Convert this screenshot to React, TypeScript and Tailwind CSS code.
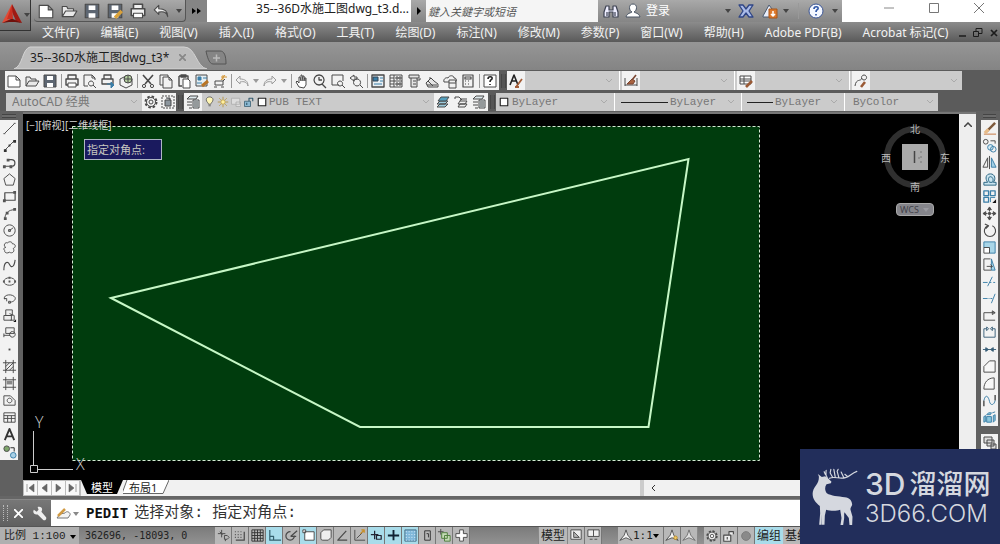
import type { ReactNode } from "react";

const K = "#4a4a4a";
const B = "#3b7fa8";

const icons: Record<string, ReactNode> = {
  new: <path d="M2 3h8l4 4v7H2zM10 3v4h4" fill="#fff" />,
  open: <path d="M2 13V4h4l1 2h5v2M2 13l3-5h10l-3 5z" fill="#e8e8e8" />,
  save: (
    <>
      <path d="M2 2h12v12H2z" fill="#5d6672" />
      <path d="M5 3h6v4H5zM5 10h6v4H5z" fill="#fff" stroke="none" />
    </>
  ),
  saveas: (
    <>
      <path d="M2 2h12v12H2z" fill="#5d6672" />
      <path d="M5 3h6v4H5zM5 10h6v4H5z" fill="#fff" stroke="none" />
      <path d="M8 14l6-6" stroke="#d9a13a" strokeWidth="3" />
    </>
  ),
  print: (
    <>
      <path d="M4 6V2h8v4M2 6h12v6H2z" fill="#f2f2f2" strokeWidth="1.4" />
      <path d="M4 10h8v4H4z" fill="#fff" />
    </>
  ),
  preview: <path d="M6 13H2V2h8l3 3v2M10 2v3h3M9 8a2.500 2.500 0 1 0 .1 0zM11 12l3 3" />,
  publish: (
    <>
      <path d="M4 6V2h7v4M2 6h11v5H2z" strokeWidth="1.3" />
      <path d="M7 11h6M11 9l3 3-3 3z" stroke={B} fill={B} />
    </>
  ),
  dwf: (
    <>
      <path d="M2 6l6-3 6 3v6l-6 3-6-3z" />
      <circle cx="10" cy="6" r="4" fill="#b4cfa0" />
      <path d="M10 2v8M6 6h8" />
    </>
  ),
  scissors: (
    <>
      <path d="M3 2l8 9M13 2L5 11" strokeWidth="1.6" />
      <circle cx="4" cy="13" r="1.600" />
      <circle cx="12" cy="13" r="1.600" />
    </>
  ),
  copydoc: <path d="M10 4V2H2v10h3M5 4h6l3 3v8H5zM11 4v3h3" />,
  paste: (
    <>
      <path d="M3 3h9v3M3 3v10h3M5 2h5v2H5z" strokeWidth="1.4" />
      <path d="M7 6h5l2 2v7H7z" fill="#fff" />
    </>
  ),
  match: (
    <>
      <path d="M2 2h11v11H2z" fill="#e5eef2" />
      <path d="M4 4h3v3H4zM9 5h4M3 10h5" stroke={B} fill={B} />
      <path d="M8 13l6-5" stroke="#b87525" strokeWidth="3" />
    </>
  ),
  block: (
    <>
      <path d="M3 8h8v4H3zM2 14h3M9 14h3M11 8l2-2" />
      <path d="M11 2v5M9 4h6M13 2l-4 5" stroke="#d29432" />
    </>
  ),
  undo: <path d="M6 3L2 7l4 4V9c4-1 7 0 8 4 0-5-3-7-8-7z" fill="#eee" />,
  redo: <path d="M10 3l4 4-4 4V9c-4-1-7 0-8 4 0-5 3-7 8-7z" fill="#eee" />,
  pan: <path d="M5 14L2 9l1-1 2 2V4h1l1 4V2h1l1 6V3h1l1 5V5h1v7l-2 3z" fill="#fff" />,
  zoom: <path d="M7 2a5 5 0 1 0 .1 0zM7 4v3h3M10 11l4 4" strokeWidth="1.300" />,
  zoomwin: <path d="M9 12H2V2h11v6M10 8a2.500 2.500 0 1 0 .1 0zM12 12l3 3" />,
  zoomprev: <path d="M6 2L2 5l4 3V6h3V4H6zM9 6a3.500 3.500 0 1 0 .1 0zM12 12l3 3" />,
  props: (
    <>
      <path d="M2 2h12v12H2z" fill="#e9eff3" strokeWidth="1.400" />
      <path d="M3 4h5v4H3z" fill={B} stroke="#345" />
      <path d="M10 5h3M10 8h3M4 11h8" stroke={B} />
    </>
  ),
  dc: <path d="M2 2h12v12H2zM6 2v12M2 5h4M2 8h12M2 11h4M8 4h2v2H8zM11 4h2v2h-2zM8 10h2v2H8zM11 10h2v2h-2z" />,
  palette: <path d="M3 2h10v3H3zM5 5v9h6V5M7 8h3M7 11h3M11 7h3v-2" fill="#e3e3e3" />,
  sheets: <path d="M2 10l5-5 3 3 4 3v3H4zM4 8l5 5M7 5l-2 0M3 12h10" fill="#e3e3e3" />,
  markup: <path d="M2 9c-1-3 2-5 4-4 1-3 6-3 6 0 3 0 3 3 1 4M7 7h7v8H7zM7 10h7M2 9h5" />,
  calc: <path d="M3 2h10v12H3zM5 4h6v2H5zM5 8h1M8 8h1M11 8h0M5 11h1M8 11h1" strokeWidth="1.200" />,
  help: (
    <>
      <path d="M2 2h12v12H2z" fill="#fff" />
      <path d="M6 6c0-3 5-3 4 0-1 1-2 1-2 3M8 11v1" strokeWidth="1.600" stroke="#222" />
    </>
  ),
  tstyle: (
    <>
      <path d="M2 12L6 2l4 10M4 8h5" stroke="#222" strokeWidth="1.600" />
      <path d="M8 14l6-8M7 14h4" stroke="#a45e39" strokeWidth="1.800" />
    </>
  ),
  dstyle: (
    <>
      <path d="M2 5v8M2 12h12M14 5v8" />
      <path d="M13 2l-4 5" stroke="#7a4530" strokeWidth="1.600" />
      <path d="M4 11l5-5 3 2-2 3z" stroke="#7a4530" fill="#a9623f" />
    </>
  ),
  table: <path d="M2 3h12v10H2zM2 6h12M2 9h12M6 6v7M10 6v7" />,
  tabstyle: (
    <>
      <path d="M2 3h11v8H2zM2 6h11M2 8h11M6 3v8" fill="#fff" />
      <path d="M8 14l6-6" stroke="#9b5a35" strokeWidth="2.600" />
    </>
  ),
  mleader: (
    <>
      <path d="M2 13C3 5 8 9 9 5M11 2a2.500 2.500 0 1 0 .1 0z" />
      <path d="M8 14l4-5" stroke="#9b5a35" strokeWidth="2.600" />
    </>
  ),
  gear: (
    <>
      <circle cx="8" cy="8" r="5.500" strokeDasharray="2.500 1.800" strokeWidth="2" />
      <circle cx="8" cy="8" r="4.500" fill="#f2f2f2" />
      <circle cx="8" cy="8" r="2" />
    </>
  ),
  wspace: (
    <>
      <path d="M2 2h12v12H2z" strokeDasharray="2 1" />
      <path d="M5 6h6v6H5zM6 4h4v2" fill="#8b959d" />
    </>
  ),
  layers: <path d="M2 5l3-3h8l-2 3zM2 8h5M2 11h5M4 14h3M8 6h6v8H8zM9 8h4M9 10h4M9 12h4" fill="#dfe9ec" />,
  layblue: (
    <>
      <path d="M2 13l3-3h8l-3 3zM2 10l3-3h8l-3 3z" fill="#9ecbdc" />
      <path d="M3 7l3-4h8l-3 4z" fill="#55a0be" />
    </>
  ),
  layprev: <path d="M2 3h4l3 3M2 3v2M5 13l2-3h7l-2 3zM5 10l2-3h7l-2 3zM7 7l1-2h6" />,
  bulb: <path d="M6 11c0-2-3-3-3-6 0-5 9-5 9 0 0 3-3 4-3 6zM6 13h3" fill="#fff6b5" />,
  sun: (
    <>
      <circle cx="8" cy="8" r="3" fill="#fff0a0" stroke="#b08b2e" />
      <path d="M8 1v3M8 12v3M1 8h3M12 8h3M3 3l2 2M11 11l2 2M13 3l-2 2M5 11l-2 2" stroke="#b08b2e" />
    </>
  ),
  vp: <path d="M2 3h11v8H2zM8 8h6v6H8z" stroke="#aaa" fill="#ddd" />,
  lock: (
    <>
      <path d="M2 7h8v7H2z" fill="#8ab8d2" stroke="#34596d" />
      <path d="M8 7V3h5v4M5 9v3" stroke="#34596d" strokeWidth="1.500" />
    </>
  ),
  swatch: <path d="M3 3h10v10H3z" fill="#fff" stroke="#222" strokeWidth="1.500" />,
  line: <path d="M3 13L13 3M1.500 13.500h2M12.500 2.500h2" />,
  xline: (
    <>
      <path d="M3 13L13 3" />
      <path d="M2 12h3v3H2zM12 2h3v3h-3zM7 7h2v2H7z" fill="#333" stroke="none" />
    </>
  ),
  pline: (
    <>
      <path d="M2 12h8c5 0 5-7 0-7H7" strokeWidth="1.300" />
      <path d="M1 11h3v3H1zM8 11h3v3H8zM5 4h3v3H5z" fill="#555" stroke="none" />
    </>
  ),
  polygon: <path d="M8 2l6 5-2 7H4L2 7z" />,
  rect: (
    <>
      <path d="M3 4h11v8H3z" strokeWidth="1.300" />
      <path d="M1 11h3v3H1zM12 2h3v3h-3z" fill="#555" stroke="none" />
    </>
  ),
  arc: (
    <>
      <path d="M3 14C3 8 7 4 13 4" />
      <path d="M2 12h3v3H2zM4 6h3v3H4zM12 2h3v3h-3z" fill="#555" stroke="none" />
    </>
  ),
  circle: <path d="M8 2a6 6 0 1 0 .1 0zM8 8l4-3M7 7h2v2H7z" />,
  cloud: <path d="M4 8C1 6 3 2 6 3c2-2 5-1 5 1 4 0 4 4 1 5 2 3-1 6-4 4-3 2-6 0-5-2-2-1-1-3 1-3z" />,
  spline: <path d="M2 14C2 5 6 4 8 8s5 3 6-5" strokeWidth="1.200" />,
  ellipse: (
    <>
      <ellipse cx="8" cy="8" rx="6" ry="4" />
      <path d="M7 3h2v2H7zM7 7h2v2H7zM1 7h2v2H1zM13 7h2v2h-2z" fill="#555" stroke="none" />
    </>
  ),
  elarc: <path d="M3 9c-3-5 8-7 11-2 1 3-3 5-6 5M2 8h3v3M7 11h2v2H7z" />,
  insert: (
    <>
      <path d="M4 2h7v6H4zM2 8h8v5H2zM8 6l5 2v5H9" fill="#eee" />
      <path d="M12 15h3v-3z" fill="#111" stroke="none" />
    </>
  ),
  mkblock: <path d="M4 3h9v6H4zM2 11h7M2 9v4M11 7a3 3 0 1 0 .1 0z" fill="#eee" />,
  point: <path d="M7 7h2v2H7z" fill={K} stroke="none" />,
  hatch: <path d="M4 1v14M12 1v14M1 4h14M1 12h14M4 8l4-4M4 12l8-8M8 12l4-4" />,
  gradient: (
    <>
      <path d="M4 1v14M12 1v14M1 4h14M1 12h14" />
      <path d="M5 5h6v4H5z" fill="#888" stroke="none" />
    </>
  ),
  region: <path d="M2 3h7l5 5v5H2zM8 5.500a2.500 2.500 0 1 0 .1 0z" />,
  mtext: <path d="M3 14L8 2l5 12M5 10h6" strokeWidth="2" stroke="#333" />,
  addsel: (
    <>
      <circle cx="5" cy="5" r="3" fill="#7ea66b" />
      <circle cx="12" cy="12" r="3" fill="#a9d0e6" stroke={B} />
      <path d="M9 4h4v4" stroke="#222" />
    </>
  ),
  erase: (
    <>
      <path d="M2 14h13" stroke="#c4743c" />
      <path d="M5 11L14 2" stroke="#7d5a3c" strokeWidth="2.600" />
      <path d="M3 13l4-4" stroke="#e7bb88" strokeWidth="3.500" />
    </>
  ),
  copy: (
    <>
      <circle cx="4" cy="4" r="2.500" />
      <path d="M9 3h5v3" />
      <circle cx="9" cy="10" r="3" stroke={B} fill="#d6ebf4" />
      <circle cx="12" cy="12" r="3" stroke={B} />
    </>
  ),
  mirror: (
    <>
      <path d="M6 3v10H1z" />
      <path d="M10 3v10h5z" fill="#a3d0e5" stroke={B} />
      <path d="M8 1v14" />
    </>
  ),
  offset: <path d="M2 14h13v-3h-3c3-3 2-9-3-9S3 7 6 11H2zM9 5c-2 0-3 3-1 6h3c2-3 0-6-2-6z" stroke="#25617f" fill="#c9e4ef" />,
  array: (
    <>
      <path d="M2 2h5v5H2zM9 2h5v5H9zM2 9h5v5H2z" stroke={B} strokeWidth="1.400" />
      <path d="M9 9h5M9 9v5" stroke={B} />
      <path d="M11 15h4v-4z" fill="#111" stroke="none" />
    </>
  ),
  move: <path d="M8 1l2 3H6zM8 15l2-3H6zM1 8l3-2v4zM15 8l-3-2v4zM7 7h2v2H7zM8 4v2M8 10v2M4 8h2M10 8h2" fill={K} />,
  rotate: <path d="M6 3a6 6 0 1 0 5 0M3 1l4 2-3 3" strokeWidth="1.200" />,
  scale: (
    <>
      <path d="M2 2h12v12H8V8H2z" fill="#a9d6e8" stroke={B} />
      <path d="M2 8h6v6H2z" fill="#fff" />
    </>
  ),
  stretch: (
    <>
      <path d="M10 2l4 12H10z" fill="#a9d6e8" stroke={B} />
      <path d="M9 2H2v12h8M5 10h6M9 8l2 2-2 2" />
    </>
  ),
  trim: <path d="M1 9h5M8 9h2M12 9h2M6 13l5-10" stroke={B} />,
  extend: <path d="M1 8h5M7 8h1M9 8h2M10 13l4-10" stroke={B} />,
  brk1: <path d="M2 5h12M2 5v8h12M11 3l3 2-3 2z" fill="none" />,
  brk: <path d="M5 4H2v9h12V4h-3M5 2v4l2-2zM11 2v4l-2-2z" stroke="#3a5f78" />,
  join: <path d="M1 8h14M4 6l3 2-3 2zM12 6L9 8l3 2z" fill="#224e6b" stroke="#3a5f78" />,
  chamfer: <path d="M2 14V8l6-6h6v12z" fill="#f7f7f7" />,
  fillet: <path d="M2 14C2 7 6 2 13 2v12z" fill="#f7f7f7" />,
  blend: (
    <>
      <path d="M2 14V8M14 2v6" strokeWidth="1.500" />
      <path d="M2 8c2-8 5-4 6 1s5 4 6-1" stroke={B} />
    </>
  ),
  explode: <path d="M5 7h5v6H5zM2 7l2-1v6l-2 1zM12 6l2-1v6l-2 2zM5 5l2-2h3l-1 2zM11 3l3-1" stroke={B} fill="#8cc6dc" />,
  order: <path d="M2 2h8v6H2zM5 5h7v6H5zM9 9h5v5H9z" fill="#ddd" />,
  binoc: <path d="M3 3h3v4h4V3h3l2 6v5h-5V9H6v5H1V9zM4 9v4M12 9v4" fill="#eef" stroke="#3d4252" strokeWidth="1.200" />,
  user: <path d="M8 1c5 0 4 7 1 8 1 1 5 1 6 5H1c1-4 5-4 6-5C4 8 3 1 8 1z" fill="#fff" stroke="#4a5565" />,
  exchange: <path d="M1 2h4l3 4 3-4h4l-4 6 4 6h-4l-3-4-3 4H1l4-6z" fill="#aabbe8" stroke="#2f4585" strokeWidth="1.300" />,
  a360: (
    <>
      <path d="M1 13L7 2l3 4v8H1z" fill="#e8eefb" stroke="#4a5a70" />
      <path d="M7 6h8v9H7z" fill="#dd7a2e" stroke="#a85718" />
      <path d="M11 8v5M9 11l2 2 2-2" stroke="#fff" strokeWidth="1.500" />
    </>
  ),
  qhelp: (
    <>
      <circle cx="8" cy="8" r="7" fill="#f4f7ff" stroke="#3a5595" />
      <path d="M6 6c0-3 5-3 4 0-1 1-2 1-2 3M8 11v1.500" stroke="#2f57a8" strokeWidth="1.700" />
    </>
  ),
  infer: <path d="M6 2v8M2 6h8M4 4l3 3M9 8h3l2 2-2 2H9zM10 12v2" />,
  snap: <path d="M2 4h1M5 4h1M8 4h1M2 7h1M5 7h1M8 7h1M2 10h1M5 10h1M8 10h1M3 13h9V4" strokeWidth="1.300" />,
  grid: <path d="M2 2h12v12H2zM5 2v12M8 2v12M11 2v12M2 5h12M2 8h12M2 11h12" stroke="#333" />,
  ortho: <path d="M3 2v11h12M3 9h4v4" stroke="#35606e" strokeWidth="1.300" />,
  polar: <path d="M7 4a4.500 4.500 0 1 0 4 4M7 9l7-6M7 9h6" strokeWidth="1.300" />,
  osnap: <path d="M4 4h10v9H4zM2 2h3v3H2z" fill="#fff" />,
  osnap3: <path d="M3 5l3-3h8v8l-3 3H5a2 2 0 0 1-2-2z" fill="#eee" />,
  angle: <path d="M12 3L3 13h10" strokeWidth="1.300" />,
  ducs: (
    <>
      <path d="M3 2v11h11M5 11l6-6" />
      <path d="M9 6l4-4M10 2h3v3" stroke="#c9912b" strokeWidth="1.500" />
    </>
  ),
  dyn: <path d="M6 3v9M2 7h8M8 8h5v4H8z" stroke="#223" strokeWidth="1.300" />,
  lwt: <path d="M2 8h12M8 2v11" stroke="#123" strokeWidth="2" />,
  transp: (
    <>
      <path d="M2 2h12v12H2z" fill="#80b8da" stroke="#496f86" />
      <path d="M3 4h10M3 7h10M3 10h10M3 13h10" stroke="#e6f4ff" strokeDasharray="1 2" />
    </>
  ),
  qp: <path d="M5 3h6v10H5zM7 6h2v4" stroke="#333" />,
  cycle: (
    <>
      <path d="M4 1v6M1 4h6" />
      <path d="M5 5h6v6H5zM8 8h6v6H8z" fill="#c5dcb6" stroke="#4e7d3c" />
    </>
  ),
  plus: <path d="M6 2h4v4h4v4h-4v4H6v-4H2V6h4z" fill="#fff" />,
  mspace: <path d="M2 2h11v10H2zM5 4v6h6z" fill="#eee" />,
  pspace: <path d="M2 2h12v7H2zM8 2v7M4 12h3M9 12h3" fill="#eee" />,
  anno: <path d="M8 1l2 6 5 6-7-3-7 3 5-6z" fill="#f3f3f3" />,
  annoy: (
    <>
      <path d="M8 1l2 6 5 6-7-3-7 3 5-6z" fill="#f3f3f3" />
      <circle cx="12" cy="10" r="2" fill="#f0c965" stroke="#b88c2d" />
    </>
  ),
  unlock: <path d="M2 7h8v7H2zM8 7V3h5v3M6 9v3" fill="#eee" strokeWidth="1.300" />,
  ball: <path d="M8 3a5 5 0 1 0 .1 0z" fill="#8a8a8a" stroke="#777" />,
};

function Icon({ name, className = "size-4" }: { name: string; className?: string }) {
  return (
    <svg viewBox="0 0 16 16" fill="none" stroke={K} strokeLinejoin="round" className={`shrink-0 ${className}`} aria-hidden="true">
      {icons[name]}
    </svg>
  );
}

function Tool({ name, className = "w-[18px]", icon = "size-4" }: { name: string; className?: string; icon?: string }) {
  return (
    <button type="button" aria-label={name} className={`flex shrink-0 items-center justify-center ${className}`}>
      <Icon name={name} className={icon} />
    </button>
  );
}

function Drop({ className = "text-[#444]" }: { className?: string }) {
  return (
    <svg viewBox="0 0 6 4" className={`h-1 w-1.5 shrink-0 ${className}`} aria-hidden="true">
      <path d="M0 0h6L3 4z" fill="currentColor" />
    </svg>
  );
}

const Sep = () => <span className="mr-px ml-[2px] h-3.5 w-px shrink-0 bg-[#999]" />;

const Split = () => <span className="mx-[2px] w-px shrink-0 self-stretch bg-white" />;

const Grip = () => (
  <span className="flex w-2 shrink-0 items-center justify-center self-stretch bg-[#5b5b5b]">
    <span className="h-3.5 w-[5px] border-x border-[#464646] bg-[#555]" />
  </span>
);

function Combo({ label, value = "", className = "", children }: { label: string; value?: string; className?: string; children?: ReactNode }) {
  return (
    <div className={`relative flex shrink-0 items-center self-stretch bg-[#cbcbcb] ${className}`}>
      {children}
      <select aria-label={label} className="h-full min-w-0 flex-1 appearance-none bg-transparent outline-none">
        <option>{value}</option>
      </select>
      <svg viewBox="0 0 8 6" className="pointer-events-none absolute right-1 h-1.5 w-2" fill="none" stroke="#aaa" aria-hidden="true">
        <path d="M1 1l3 3 3-3" />
      </svg>
    </div>
  );
}

const menus = ["文件(F)", "编辑(E)", "视图(V)", "插入(I)", "格式(O)", "工具(T)", "绘图(D)", "标注(N)", "修改(M)", "参数(P)", "窗口(W)", "帮助(H)", "Adobe PDF(B)", "Acrobat 标记(C)"];

function TitleBar() {
  return (
    <header className="relative flex h-[22px] bg-linear-to-b from-[#a9a9a9] to-[#858585] pl-[34px]">
      <button type="button" aria-label="应用程序菜单" className="absolute top-0 left-0 z-10 flex h-[31px] w-[31px] items-center border-r border-b border-[#333] bg-linear-to-b from-[#a0a0a0] to-[#6e6e6e]">
        <svg viewBox="0 0 24 24" className="size-6" aria-hidden="true">
          <path d="M12 1L2 20l6-2 4-9z" fill="#e04a35" />
          <path d="M12 1l10 19-6-2-4-9z" fill="#9f1a13" />
          <path d="M2 20l9-4h2l9 4-7-1H9z" fill="#70100c" />
          <path d="M12 2L7 16h6z" fill="#c93022" />
        </svg>
        <Drop />
      </button>
      <div className="flex w-[152px] items-center rounded-b-sm border-r border-b border-[#555]">
        {["new", "open", "save", "saveas", "print", "undo"].map((n) => (
          <Tool key={n} name={n} className="w-[23px]" icon="size-[18px]" />
        ))}
        <span className="ml-1"><Drop /></span>
      </div>
      <button type="button" aria-label="更多" className="flex w-[21px] items-center justify-center bg-[#858585]">
        <svg viewBox="0 0 10 6" className="h-1.5 w-2.5" aria-hidden="true"><path d="M0 0l4 3-4 3zM5 0l4 3-4 3z" /></svg>
      </button>
      <h1 className="flex-1 truncate bg-white pr-0.5 text-right text-xs leading-[18px] text-[#222]">35--36D水施工图dwg_t3.d...</h1>
      <button type="button" aria-label="展开搜索" className="flex w-[15px] items-center justify-center">
        <svg viewBox="0 0 4 8" className="h-2 w-1" aria-hidden="true"><path d="M0 0l4 4-4 4z" /></svg>
      </button>
      <input aria-label="搜索" placeholder="鍵入关鍵字或短语" className="w-[172px] bg-[#f5f5f5] px-0.5 pt-0.5 text-[11px] italic outline-none placeholder:text-[#555]" />
      <div className="flex w-[244px] items-center pl-0.5">
        <Tool name="binoc" className="w-[22px]" icon="size-4" />
        <Tool name="user" className="mr-0.5 w-[22px]" icon="size-4" />
        <button type="button" className="text-xs text-white">登录</button>
        <span className="ml-auto"><Drop /></span>
        <Tool name="exchange" className="ml-1.5 w-[18px]" icon="size-4" />
        <Tool name="a360" className="ml-1.5 w-[18px]" icon="size-4" />
        <span className="ml-1"><Drop /></span>
        <span className="mx-[9px] h-4 w-px bg-[#999]" />
        <Tool name="qhelp" className="w-4" icon="size-4" />
        <span className="mr-1 ml-2"><Drop /></span>
      </div>
      <div className="flex w-[158px] justify-between bg-white pt-0.5 pr-3.5 pl-[42px]">
        <button type="button" aria-label="最小化" className="flex size-3 items-center"><svg viewBox="0 0 10 10" className="size-2.5" stroke="#888" aria-hidden="true"><path d="M0 5h10" /></svg></button>
        <button type="button" aria-label="最大化" className="size-3"><svg viewBox="0 0 10 10" className="size-2.5" stroke="#777" fill="none" aria-hidden="true"><path d="M.5.5h9v9h-9z" /></svg></button>
        <button type="button" aria-label="关闭" className="size-3"><svg viewBox="0 0 10 10" className="size-2.5" stroke="#777" aria-hidden="true"><path d="M0 0l10 10M10 0L0 10" /></svg></button>
      </div>
    </header>
  );
}

function MenuBar() {
  return (
    <nav className="flex h-5 items-center justify-between bg-linear-to-b from-[#8c8c8c] to-[#5a5a5a] pt-0.5 pr-0.5 pl-[42px] text-xs text-[#f2f2f2]">
      <div className="flex gap-[21px]">
        {menus.map((m) => (
          <button key={m} type="button" className="shrink-0 leading-4 whitespace-nowrap">{m}</button>
        ))}
      </div>
      <div className="flex gap-[7px] text-[#1c1c1c]">
        <button type="button" aria-label="最小化图形"><svg viewBox="0 0 7 10" className="h-2.5 w-[7px]" stroke="currentColor" strokeWidth="1.500" aria-hidden="true"><path d="M0 8h7" /></svg></button>
        <button type="button" aria-label="还原图形"><svg viewBox="0 0 10 10" className="size-2.5" fill="none" stroke="currentColor" aria-hidden="true"><path d="M.5 3.500h5v5h-5zM3 3V.5h6v5H6" /></svg></button>
        <button type="button" aria-label="关闭图形窗口"><svg viewBox="0 0 8 10" className="h-2.5 w-2" stroke="currentColor" strokeWidth="1.700" aria-hidden="true"><path d="M1 2l6 6M7 2L1 8" /></svg></button>
      </div>
    </nav>
  );
}

function FileTabs() {
  return (
    <div className="flex h-7 items-end bg-linear-to-b from-[#969696] to-[#848484] pb-px pl-3.5">
      <div className="relative flex h-[23px] w-[193px] items-center">
        <svg viewBox="0 0 193 23" preserveAspectRatio="none" className="absolute inset-0 size-full" aria-hidden="true">
          <path d="M0 23C9 20 8 3 16 1h154c12 0 12 20 23 22z" fill="#bdbdbd" stroke="#d4d4d4" />
        </svg>
        <a href="#drawing" className="relative ml-4 text-xs whitespace-nowrap text-[#1d1d1d]">35--36D水施工图dwg_t3*</a>
        <button type="button" aria-label="关闭图形" className="relative ml-2.5">
          <svg viewBox="0 0 8 8" className="size-[7px]" stroke="#888" strokeWidth="2" aria-hidden="true"><path d="M0 0l8 8M8 0L0 8" /></svg>
        </button>
      </div>
      <button type="button" aria-label="新图形" className="mb-1 -ml-0.5">
        <svg viewBox="0 0 22 15" className="h-[15px] w-[22px]" fill="#858585" stroke="#555" aria-hidden="true">
          <path d="M1 1h14c4 0 6 4 6 13H8C4 14 2 6 1 1z" />
          <path d="M8 8h7M11.500 4.500v7" stroke="#bbb" strokeWidth="1.500" />
        </svg>
      </button>
    </div>
  );
}

function Toolbars() {
  const group = (names: string[]) => names.map((n) => <Tool key={n} name={n} />);
  return (
    <div className="flex flex-col gap-[3px] bg-[#5b5b5b] pt-px font-['Liberation_Mono','Noto_Sans_CJK_SC',monospace] text-[11px] text-[#777]">
      <div className="flex h-[19px]">
        <span className="w-[5px] shrink-0" />
        <div className="flex shrink-0 items-center bg-[#f2f2f2]">
          {group(["new", "open", "save"])}<Sep />
          {group(["print", "preview", "publish", "dwf"])}<Sep />
          {group(["scissors", "copydoc", "paste", "match", "block"])}<Sep />
          <span className="flex items-center gap-[2px] pr-0.5 opacity-50"><Tool name="undo" /><Drop /><Tool name="redo" /><Drop /></span><Sep />
          {group(["pan", "zoom", "zoomwin", "zoomprev"])}<Sep />
          {group(["props", "dc", "palette", "sheets", "markup", "calc"])}<Sep />
          {group(["help"])}
        </div>
        <Grip />
        {[["tstyle", "文字样式"], ["dstyle", "标注样式"], ["tabstyle", "表格样式"], ["mleader", "多重引线样式"]].map(([n, l], i) => (
          <div key={n} className="flex bg-[#cbcbcb]">
            {i > 0 && <Split />}
            <Tool name={n} className="w-[18px] bg-[#f2f2f2]" />
            <Combo label={l} className="w-[92px]" />
          </div>
        ))}
      </div>
      <div className="flex h-[18px]">
        <span className="w-[6px] shrink-0" />
        <Combo label="工作空间" value="AutoCAD 经典" className="w-[136px] pl-1.5 font-['Noto_Sans','Noto_Sans_CJK_SC',sans-serif] text-xs" />
        <div className="flex bg-[#f2f2f2]"><Tool name="gear" /><Tool name="wspace" className="w-4" /></div>
        <Grip />
        <Tool name="layers" className="w-[18px] bg-[#f2f2f2]" />
        <Combo label="图层" value="PUB TEXT" className="w-[232px] gap-px pl-[2px]">
          {["bulb", "sun", "vp", "lock"].map((n) => <Icon key={n} name={n} className="size-3" />)}
          <Icon name="swatch" className="size-3" />
        </Combo>
        <div className="flex bg-[#f2f2f2]">{group(["layblue", "layprev", "layers"])}</div>
        <Grip />
        <Combo label="颜色" value="ByLayer" className="w-[116px] gap-0.5 pl-[2px]"><Icon name="swatch" className="size-3" /></Combo>
        <span className="flex bg-[#cbcbcb]"><Split /></span>
        <Combo label="线型" value="ByLayer" className="w-[122px] gap-0.5 pl-1"><span className="h-px w-[47px] bg-[#222]" /></Combo>
        <span className="flex bg-[#cbcbcb]"><Split /></span>
        <Combo label="线宽" value="ByLayer" className="w-[98px] gap-0.5 pl-[3px]"><span className="h-px w-[26px] bg-[#222]" /></Combo>
        <span className="flex bg-[#cbcbcb]"><Split /></span>
        <Combo label="打印样式" value="ByColor" className="w-[91px] pl-1.5" />
      </div>
    </div>
  );
}

const drawTools = ["line", "xline", "pline", "polygon", "rect", "arc", "circle", "cloud", "spline", "ellipse", "elarc", "insert", "mkblock", "point", "hatch", "gradient", "region", "table", "mtext", "addsel"];
const modifyTools = ["erase", "copy", "mirror", "offset", "array", "move", "rotate", "scale", "stretch", "trim", "extend", "brk1", "brk", "join", "chamfer", "fillet", "blend", "explode"];

function SideTools({ tools, extra }: { tools: string[]; extra?: string }) {
  return (
    <div className="flex flex-col">
      <span className="mx-0.5 my-[2px] h-1 border-y border-[#444] bg-[#6b6b6b]" />
      <div className="flex flex-col bg-[#f2f2f2]">
        {tools.map((n) => <Tool key={n} name={n} className="h-[17px] w-full" icon="size-[15px]" />)}
      </div>
      {extra && <div className="mt-2 bg-[#f2f2f2]"><Tool name={extra} className="h-[17px] w-full" /></div>}
    </div>
  );
}

function Drawing() {
  return (
    <section id="drawing" aria-label="绘图区" className="relative min-h-[360px] flex-1 overflow-hidden bg-black">
      <svg width="740" height="365" className="absolute top-0 left-0" aria-hidden="true">
        <rect x="49.5" y="12.5" width="687" height="334" fill="#003c0d" stroke="#d5ecd5" strokeDasharray="3 2" />
        <path d="M88 184L665.500 45 625.500 313H337z" fill="none" stroke="#c6f7c6" strokeWidth="2" />
        <path d="M10.500 317v34M14 355.500h36M7.500 351.500h7v7h-7z" fill="none" stroke="#ccc" />
      </svg>
      <span className="absolute top-[3px] left-[3px] text-[10px] leading-4 text-[#d5d5d5]">[−][俯视][二维线框]</span>
      <span className="absolute top-[25px] left-[61px] border border-[#aeb6c4] bg-[#1a1a5e] pr-4 pl-0.5 text-[11px] leading-[19px] whitespace-nowrap text-[#c9c9c0]">指定对角点:</span>
      <span className="absolute top-[300px] left-[12px] font-['Open_Sans',sans-serif] text-base leading-4 font-light text-[#ccc]">Y</span>
      <span className="absolute top-[342px] left-[53px] font-['Open_Sans',sans-serif] text-base leading-4 font-light text-[#ccc]">X</span>
      <div className="absolute top-[8px] right-[9px] h-[96px] w-[70px] text-[10px] text-[#bbb]">
        <svg viewBox="0 0 70 70" className="absolute top-0 left-0 size-[70px]" aria-hidden="true">
          <circle cx="35" cy="35" r="28" fill="none" stroke="#2f2f2f" strokeWidth="6" />
          <path d="M22 22h26v26H22z" fill="#aaa" />
          <path d="M34.500 29v12" stroke="#444" strokeWidth="1.500" />
          <path d="M41 29v2M41 34v2M41 39v2M38 36h2" stroke="#777" />
        </svg>
        <span className="absolute top-0 left-[30px] leading-[14px]">北</span>
        <span className="absolute top-[29px] left-px leading-[14px]">西</span>
        <span className="absolute top-[29px] right-0 leading-[14px]">东</span>
        <span className="absolute top-[58px] left-[30px] leading-[14px]">南</span>
        <button type="button" className="absolute top-[81px] left-[16px] flex h-[13px] w-[38px] items-center gap-1 rounded border border-[#aaa] bg-[#85858b] pl-[3px] text-[9px] text-[#414149]">
          WCS<Drop className="text-[#9a9aa0]" />
        </button>
      </div>
    </section>
  );
}

function LayoutTabs() {
  return (
    <div className="flex h-4 items-stretch bg-[#f1f1f1] text-xs text-[#222]">
      <div className="flex border border-[#bbb] bg-[#f8f8f8]">
        {["M2 1v8M9 1v8L4 5z", "M8 1v8L3 5z", "M3 1v8l5-4z", "M9 1v8M2 1v8l5-4z"].map((d, i) => (
          <button key={d} type="button" aria-label={["第一个", "上一个", "下一个", "最后一个"][i]} className="flex w-3.5 items-center justify-center border-r border-[#bbb]">
            <svg viewBox="0 0 11 10" className="h-2.5 w-[11px]" fill="#666" stroke="#666" strokeWidth=".6" aria-hidden="true"><path d={d} /></svg>
          </button>
        ))}
      </div>
      <button type="button" className="relative flex w-[42px] items-center justify-center text-white">
        <svg viewBox="0 0 42 16" className="absolute inset-0" aria-hidden="true"><path d="M0 0h42l-6 14H6z" /></svg>
        <span className="relative text-[11px] leading-3">模型</span>
      </button>
      <button type="button" className="relative flex w-[46px] items-center pl-1.5">
        <svg viewBox="0 0 46 16" className="absolute inset-0" fill="#fff" stroke="#666" aria-hidden="true"><path d="M4 0L-1 13.500h41L46 0" /></svg>
        <span className="relative text-[11px] leading-3">布局1</span>
      </button>
      <span className="ml-auto w-1 bg-[#ccc]" />
      <button type="button" aria-label="向左滚动" className="flex w-[332px] items-center pl-[7px]">
        <svg viewBox="0 0 4 6" className="h-1.5 w-1" fill="none" stroke="#333" aria-hidden="true"><path d="M4 0L1 3l3 3" /></svg>
      </button>
    </div>
  );
}

function CommandLine() {
  return (
    <form className="flex h-[27px] border-t border-[#888] bg-white" onSubmit={(e) => e.preventDefault()}>
      <div className="flex w-[51px] shrink-0 items-center bg-linear-to-b from-[#777] to-[#606060] pl-[3px]">
        <span className="h-4 w-[5px] border-x border-dotted border-[#bbb]" />
        <button type="button" aria-label="关闭命令行" className="ml-1.5">
          <svg viewBox="0 0 9 9" className="size-[9px]" stroke="#fff" strokeWidth="1.800" aria-hidden="true"><path d="M0 0l9 9M9 0L0 9" /></svg>
        </button>
        <button type="button" aria-label="自定义" className="ml-[9px]">
          <svg viewBox="0 0 16 16" className="size-[15px]" fill="#eee" aria-hidden="true"><path d="M2 4l3 2 2-2-1-3c4-1 6 2 4 5l5 6c1 2-1 4-3 3L6 9C3 10 0 7 2 4z" /></svg>
        </button>
      </div>
      <label htmlFor="cmd" className="flex items-center pl-1 font-['DejaVu_Sans_Mono','Noto_Sans_CJK_SC',monospace] text-sm whitespace-pre text-[#333]">
        <svg viewBox="0 0 24 16" className="mr-[7px] h-4 w-6" fill="none" stroke="#777" aria-hidden="true">
          <path d="M5 9l5-1c2-3 6 0 5 2l-2 3H2z" fill="#f4f4f4" />
          <path d="M3 11l7-7" stroke="#d19a43" strokeWidth="2.500" />
          <path d="M18 7h6l-3 4z" fill="#888" stroke="none" />
        </svg>
        <b className="text-[#111]">PEDIT</b>
        <span className="ml-1.5 text-[15px]">选择对象: 指定对角点:</span>
      </label>
      <input id="cmd" className="min-w-0 flex-1 bg-transparent outline-none" />
    </form>
  );
}

function StatusBar() {
  const active = ["ortho", "osnap", "dyn", "lwt", "transp"];
  const toggles = ["infer", "snap", "grid", "ortho", "polar", "osnap", "osnap3", "angle", "ducs", "dyn", "lwt", "transp", "qp", "cycle", "plus"];
  const cell = "w-[17px] border-r border-[#777]";
  return (
    <footer className="flex h-[18px] items-stretch border-t border-[#555] bg-linear-to-b from-[#7b7b7b] to-[#929292] text-[11px] whitespace-nowrap text-[#222]">
      <button type="button" className="flex w-[79px] shrink-0 items-center gap-1 bg-[#b0b0b0] pt-0.5 pl-1 font-['Liberation_Mono','Noto_Sans_CJK_SC',monospace] text-[11px] leading-[15px]">
        <span>比例 1:100</span><Drop className="text-black" />
      </button>
      <output className="w-[136px] shrink-0 pl-1.5 font-['DejaVu_Sans_Mono',monospace] text-[10px] leading-[17px]">362696, -18093, 0</output>
      <div className="flex bg-[#b8b8b8]">
        {toggles.map((n) => <Tool key={n} name={n} className={`${cell} ${active.includes(n) ? "bg-[#a9dcea]" : ""}`} icon="size-[15px]" />)}
      </div>
      <span className="w-[68px] shrink-0" />
      <div className="flex bg-[#b8b8b8]">
        <button type="button" className="w-[30px] border-x border-[#888] text-xs leading-[17px]">模型</button>
        <Tool name="mspace" className={cell} icon="size-[15px]" />
        <Tool name="pspace" className={cell} icon="size-[15px]" />
      </div>
      <span className="w-4 shrink-0" />
      <div className="flex bg-[#b8b8b8]">
        <button type="button" className="flex w-[46px] items-center border-r border-[#777] pl-px font-['DejaVu_Sans_Mono',monospace] text-[11px] leading-[17px]">
          <Icon name="anno" className="size-[14px]" />1:1<Drop className="text-black" />
        </button>
        <Tool name="annoy" className={cell} icon="size-[14px]" />
        <Tool name="anno" className={`${cell} opacity-70`} icon="size-[14px]" />
      </div>
      <span className="w-1.5 shrink-0" />
      <div className="flex bg-[#b8b8b8]">
        {["gear", "unlock", "ball"].map((n) => <Tool key={n} name={n} className={cell} icon="size-[14px]" />)}
        <button type="button" className="w-[28px] bg-[#a9dcea] text-xs leading-[17px]">编组</button>
        <button type="button" className="w-[40px] pl-0.5 text-left text-xs leading-[17px]">基线</button>
      </div>
    </footer>
  );
}

function Brand() {
  return (
    <aside className="absolute right-0 bottom-0 z-20 flex h-[95px] w-[200px] items-center bg-[#222e5b] pl-3 text-[#d5d8df]">
      <svg viewBox="450 80 140 180" className="h-[60px] w-[47px] shrink-0" fill="#d5d8df" aria-hidden="true">
        <path d="M467 101l12 9 10-2 8 5 11 11-2 5-13 3c-6 9-5 19 1 27 12 8 35 9 54 12 14 2 21 9 22 22-2 6-6 9-5 15l6 21-1 25h-8l-2-21-13-17-1 5v12l-3 21h-8l3-21-4-25c-12 5-30 4-42 0l-4 18-1 27h-8v-32l-1 32h-7l3-34-1-22c-15-13-24-25-21-43 5-18 20-25 18-46z" />
        <g fill="none" stroke="#d5d8df" strokeWidth="3.500" strokeLinecap="round">
          <path d="M495 112c-6-8-4-14-3-22M490 103l-4-9M502 114c16-8 28 4 48-2 14-3 17-13 34-19M511 110l-7-12 2-11M519 109l-4-22M530 111l-5-18 3-6M545 112l-8-17M557 109l-9-7" />
        </g>
      </svg>
      <div className="ml-[6px] flex flex-col pt-0.5">
        <div className="flex items-center gap-1 text-[28px] leading-8 font-medium"><span className="font-['Inter',sans-serif] text-[30px]">3D</span><span className="text-[27px]">溜溜网</span></div>
        <div className="font-['Inter',sans-serif] text-[24px] leading-7 font-light">3D66.COM</div>
      </div>
    </aside>
  );
}

export default function App() {
  return (
    <div className="relative flex min-h-screen flex-col overflow-hidden bg-[#666] font-['Noto_Sans','Noto_Sans_CJK_SC',sans-serif]">
      <TitleBar />
      <MenuBar />
      <FileTabs />
      <Toolbars />
      <main className="flex flex-1 bg-[#606060] pt-px">
        <div className="w-[18px] shrink-0"><SideTools tools={drawTools} /></div>
        <div className="ml-[5px] flex min-w-0 flex-1 flex-col border-t-2 border-[#777]">
          <div className="flex flex-1">
            <Drawing />
            <div className="flex w-[17px] shrink-0 justify-center bg-[#eee] pt-2">
              <svg viewBox="0 0 8 5" className="h-[5px] w-2" fill="none" stroke="#444" strokeWidth="1.500" aria-hidden="true"><path d="M0 5l4-4 4 4" /></svg>
            </div>
          </div>
          <LayoutTabs />
        </div>
        <div className="mr-[2px] ml-[5px] w-[17px] shrink-0"><SideTools tools={modifyTools} extra="order" /></div>
      </main>
      <div className="h-[3px] bg-[#666]" />
      <CommandLine />
      <StatusBar />
      <Brand />
    </div>
  );
}
